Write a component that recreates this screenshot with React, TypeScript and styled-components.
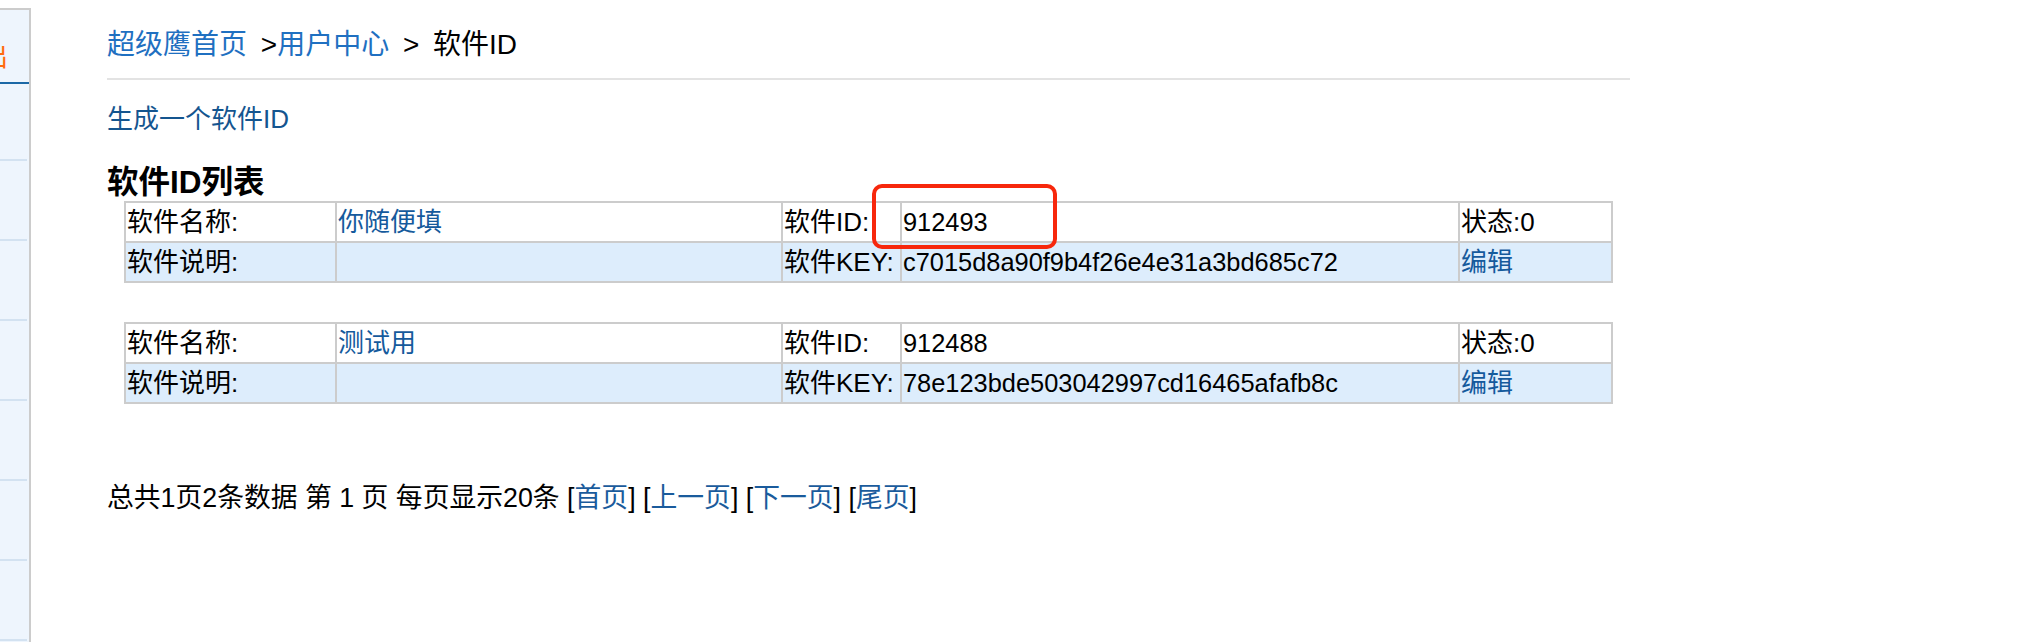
import React from 'react'
import styled, { createGlobalStyle } from 'styled-components'

const GlobalStyle = createGlobalStyle`
  html, body {
    margin: 0;
    padding: 0;
    background: #fff;
  }
  body {
    font-family: "Liberation Sans", "Noto Sans CJK SC", sans-serif;
    font-size: 26px;
    color: #000;
  }
`

type Software = {
  name: string
  id: string
  key: string
  state: number
}

const softwares: Software[] = [
  { name: '你随便填', id: '912493', key: 'c7015d8a90f9b4f26e4e31a3bd685c72', state: 0 },
  { name: '测试用', id: '912488', key: '78e123bde503042997cd16465afafb8c', state: 0 },
]

// side menu rows below the active one (the menu is cut off by the window)
const sideHeights = [75, 78, 78, 78, 78, 78, 78]

const Page = styled.div`
  display: flex;
  align-items: flex-start;
  min-height: 642px;
`

const Sidebar = styled.div`
  flex: 0 0 29px;
  margin-top: 8px;
  height: 634px;
  background: #eef5fd;
  border-top: 2px solid #cccccc;
  border-right: 2px solid #cccccc;
  overflow: hidden;
`

const SideItem = styled.div<{ $h: number }>`
  height: ${(p) => p.$h}px;
  margin-right: 2px;
  border-bottom: 2px solid #d3e2f1;
`

const SideActive = styled.div`
  display: flex;
  justify-content: flex-end;
  height: 72px;
  padding-right: 21px;
  border-bottom: 2px solid #1b68a6;
  white-space: nowrap;
  color: #ff6a10;
  line-height: 30px;
`

const SideText = styled.span`
  margin-top: 32px;
`

const Main = styled.div`
  width: 1523px;
  margin-left: 76px;
`

const Breadcrumb = styled.div`
  font-size: 28px;
  line-height: 40px;
  padding-top: 25px;
  padding-bottom: 13px;
  border-bottom: 2px solid #e3e3e3;
  white-space: pre;
  word-spacing: 6px;
`

const Crumb = styled.a`
  color: #1f70c1;
  text-decoration: none;
`

const ActionLink = styled.a`
  display: block;
  margin-top: 20px;
  line-height: 38px;
  color: #14558f;
  text-decoration: none;
`

const Heading = styled.h3`
  margin: 26px 0 1px;
  font-size: 31.5px;
  line-height: 36px;
  font-weight: bold;
`

const ListWrap = styled.div`
  position: relative;
  margin-left: 17px;
  width: 1487px;
`

const Table = styled.table`
  width: 1487px;
  table-layout: fixed;
  border-collapse: collapse;
  & + & {
    margin-top: 39px;
  }
`

const Row = styled.tr<{ $alt?: boolean }>`
  background: ${(p) => (p.$alt ? '#ddedfc' : '#fff')};
`

const Cell = styled.td`
  border: 2px solid #cccccc;
  padding: 0 1px;
  line-height: 38px;
  white-space: nowrap;
  overflow: hidden;
`

const Value = styled.span`
  font-size: 25.4px;
`

const CellLink = styled.a`
  color: #155a9c;
  text-decoration: none;
`

const Highlight = styled.div`
  position: absolute;
  left: 748px;
  top: -17px;
  width: 185px;
  height: 65px;
  box-sizing: border-box;
  border: 4px solid #f7270c;
  border-radius: 10px;
  pointer-events: none;
`

const Pager = styled.div`
  margin-top: 75px;
  font-size: 26.8px;
  line-height: 38px;
  white-space: pre;
`

const PagerLink = styled.a`
  color: #1a5b9c;
  text-decoration: none;
`

function SoftwareTable({ item }: { item: Software }) {
  return (
    <Table>
      <colgroup>
        <col style={{ width: 211 }} />
        <col style={{ width: 446 }} />
        <col style={{ width: 119 }} />
        <col style={{ width: 558 }} />
        <col style={{ width: 153 }} />
      </colgroup>
      <tbody>
        <Row>
          <Cell>软件名称:</Cell>
          <Cell>
            <CellLink href="#">{item.name}</CellLink>
          </Cell>
          <Cell>软件ID:</Cell>
          <Cell>
            <Value>{item.id}</Value>
          </Cell>
          <Cell>状态:{item.state}</Cell>
        </Row>
        <Row $alt>
          <Cell>软件说明:</Cell>
          <Cell></Cell>
          <Cell>软件KEY:</Cell>
          <Cell>
            <Value>{item.key}</Value>
          </Cell>
          <Cell>
            <CellLink href="#">编辑</CellLink>
          </Cell>
        </Row>
      </tbody>
    </Table>
  )
}

export default function App() {
  return (
    <>
      <GlobalStyle />
      <Page>
        <Sidebar>
          <SideActive>
            <SideText>退出</SideText>
          </SideActive>
          {sideHeights.map((h, i) => (
            <SideItem key={i} $h={h} />
          ))}
        </Sidebar>
        <Main>
          <Breadcrumb>
            <Crumb href="#">超级鹰首页</Crumb>
            {' >'}
            <Crumb href="#">用户中心</Crumb>
            {' > 软件ID'}
          </Breadcrumb>
          <ActionLink href="#">生成一个软件ID</ActionLink>
          <Heading>软件ID列表</Heading>
          <ListWrap>
            {softwares.map((s) => (
              <SoftwareTable key={s.id} item={s} />
            ))}
            <Highlight />
          </ListWrap>
          <Pager>
            {'总共1页2条数据 第 1 页 每页显示20条 ['}
            <PagerLink href="#">首页</PagerLink>
            {'] ['}
            <PagerLink href="#">上一页</PagerLink>
            {'] ['}
            <PagerLink href="#">下一页</PagerLink>
            {'] ['}
            <PagerLink href="#">尾页</PagerLink>
            {']'}
          </Pager>
        </Main>
      </Page>
    </>
  )
}
